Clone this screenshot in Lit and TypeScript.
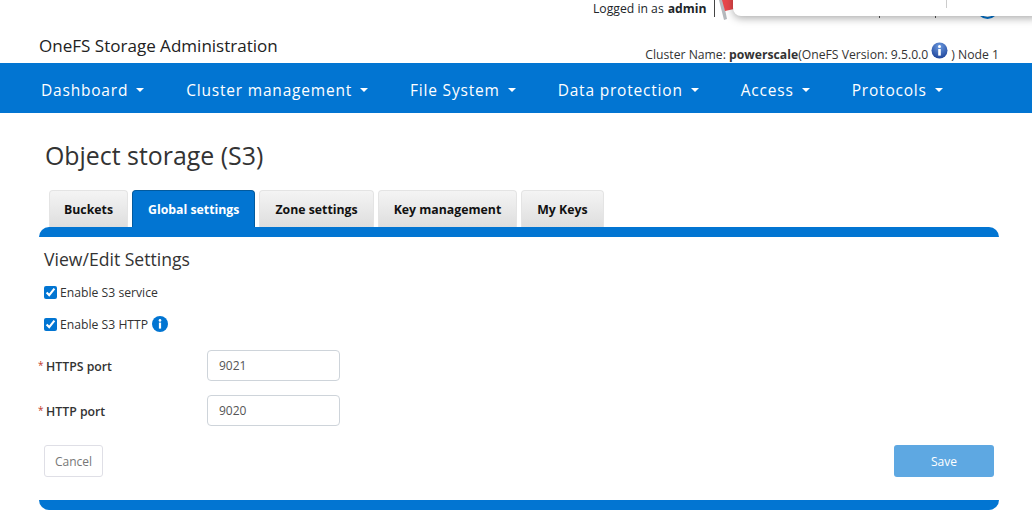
import { LitElement, html, css } from 'lit';
import { customElement } from 'lit/decorators.js';

const MENUS = ['Dashboard', 'Cluster management', 'File System', 'Data protection', 'Access', 'Protocols'];
const TABS = ['Buckets', 'Global settings', 'Zone settings', 'Key management', 'My Keys'];

@customElement('app-root')
export class AppRoot extends LitElement {
  static styles = css`
    :host {
      display: block;
      height: 511px;
      overflow: hidden;
      position: relative;
      background: #fff;
      color: #212529;
      font-family: 'Open Sans', 'Noto Sans', sans-serif;
      font-size: 12px;
    }
    .top {
      height: 63px;
      display: flex;
      flex-direction: column;
    }
    .login {
      height: 17px;
      padding-left: 593px;
      display: flex;
      align-items: center;
      font-size: 12.2px;
      white-space: nowrap;
    }
    .login b { margin-left: 4px; }
    .divider {
      width: 1px;
      height: 17px;
      background: #444;
      margin-left: 8px;
    }
    .brand {
      flex: 1;
      display: flex;
      justify-content: space-between;
      align-items: flex-end;
      padding: 0 33px 0 39px;
    }
    .brand h1 {
      margin: 0 0 5px;
      font-size: 17.05px;
      font-weight: 400;
      line-height: 24px;
      color: #222;
    }
    .cluster {
      display: flex;
      align-items: flex-end;
      font-size: 12.2px;
      line-height: 16px;
      white-space: pre;
      color: #333;
    }
    .cluster svg { margin: 0 3px 4px 3px; }
    nav {
      height: 50px;
      box-sizing: border-box;
      padding: 3px 0 0 41px;
      background: #0275d2;
      display: flex;
      color: #fff;
      align-items: center;
      gap: 42px;
      font-size: 15.5px;
      letter-spacing: 0.8px;
    }
    nav span { display: flex; align-items: center; gap: 8px; }
    nav i {
      width: 0;
      height: 0;
      border: 4.5px solid transparent;
      border-top-color: #fff;
      border-bottom: 0;
    }
    main { padding: 0 33px 0 39px; }
    h2 {
      margin: 26px 0 0 6px;
      font-size: 24.9px;
      line-height: 33px;
      font-weight: 400;
      color: #333;
    }
    .tabs {
      display: flex;
      gap: 4px;
      margin: 18px 0 0 10px;
      height: 37px;
      align-items: flex-end;
    }
    .tab {
      height: 37px;
      padding: 0 15px;
      box-sizing: border-box;
      display: flex;
      align-items: center;
      font-size: 12.3px;
      font-weight: 700;
      color: #111;
      background: linear-gradient(#f4f4f4, #dedede);
      border: 1px solid #e4e4e4;
      border-bottom: 0;
      border-radius: 4px 4px 0 0;
    }
    .tab:first-child { padding: 0 14px; }
    .tab.active {
      background: #0275d2;
      border-color: #025a9e;
      color: #fff;
    }
    .bar { height: 10px; background: #0275d2; }
    .bar.head { border-radius: 10px 10px 0 0; }
    .bar.foot { border-radius: 0 0 10px 10px; margin-top: 23px; }
    h3 {
      margin: 10px 0 0 5px;
      font-size: 17.6px;
      line-height: 24px;
      font-weight: 400;
      color: #333;
    }
    .check {
      display: flex;
      align-items: center;
      gap: 3px;
      margin-left: 5px;
      height: 16px;
      font-size: 12.2px;
      color: #333;
    }
    .check input {
      width: 13px;
      height: 13px;
      margin: 0;
      accent-color: #0275d2;
    }
    .check svg { margin-left: 1px; }
    .checks { display: flex; flex-direction: column; gap: 16px; margin-top: 13px; }
    .fields { display: flex; flex-direction: column; gap: 14px; margin-top: 18px; }
    .field { display: flex; align-items: center; margin-left: -1px; }
    .field label {
      width: 169px;
      padding-top: 1px;
      font-size: 12.3px;
      font-weight: 600;
      color: #333;
      display: flex;
    }
    .field label em {
      width: 8px;
      color: #c0392b;
      font-size: 10px;
      font-style: normal;
      font-weight: 400;
    }
    .field .input {
      width: 133px;
      height: 31px;
      box-sizing: border-box;
      border: 1px solid #ced4da;
      border-radius: 4px;
      padding: 0 11px;
      display: flex;
      align-items: center;
      font-size: 12px;
      color: #555;
    }
    .actions {
      display: flex;
      justify-content: space-between;
      margin: 19px 5px 0;
    }
    .btn {
      height: 32px;
      box-sizing: border-box;
      display: flex;
      align-items: center;
      justify-content: center;
      border-radius: 3px;
      font-size: 12px;
    }
    .btn.cancel { width: 59px; border: 1px solid #dfdfe6; color: #777; }
    .btn.save { width: 100px; background: #5ea8e2; color: #fff; }
    .popup {
      position: absolute;
      left: 733px;
      top: -10px;
      right: -10px;
      height: 26px;
      background: #fff;
      border-radius: 8px;
      box-shadow: 0 2px 8px rgba(0, 0, 0, 0.35);
    }
    .popup::after {
      content: '';
      position: absolute;
      left: 213px;
      top: 0;
      width: 1px;
      height: 18px;
      background: #ccc;
    }
    .flag { position: absolute; left: 718px; top: 0; }
    .under { position: absolute; top: 14px; width: 1px; height: 4px; background: #555; }
    .ring {
      position: absolute;
      left: 977px;
      top: -2px;
      width: 17px;
      height: 17px;
      border: 2px solid #0275d2;
      border-radius: 50%;
    }
  `;

  infoGlossy() {
    return html`<svg width="17" height="17" viewBox="0 0 17 17">
      <defs>
        <radialGradient id="gl" cx="0.5" cy="0.25" r="0.8">
          <stop offset="0" stop-color="#6d9be0"></stop>
          <stop offset="1" stop-color="#1a3f96"></stop>
        </radialGradient>
      </defs>
      <circle cx="8.5" cy="8.5" r="8" fill="url(#gl)"></circle>
      <circle cx="8.5" cy="4.6" r="1.5" fill="#fff"></circle>
      <rect x="7.2" y="7" width="2.6" height="6.6" fill="#fff"></rect>
    </svg>`;
  }

  infoFlat() {
    return html`<svg width="16" height="16" viewBox="0 0 16 16">
      <circle cx="8" cy="8" r="8" fill="#0275d2"></circle>
      <circle cx="8" cy="4.4" r="1.3" fill="#fff"></circle>
      <rect x="6.9" y="6.6" width="2.2" height="6" fill="#fff"></rect>
    </svg>`;
  }

  render() {
    return html`
      <div class="top">
        <div class="login">Logged in as <b>admin</b><span class="divider"></span></div>
        <div class="brand">
          <h1>OneFS Storage Administration</h1>
          <div class="cluster">Cluster Name: <b>powerscale</b>(OneFS Version: 9.5.0.0${this.infoGlossy()}) Node 1</div>
        </div>
      </div>
      <nav>
        ${MENUS.map((m) => html`<span>${m}<i></i></span>`)}
      </nav>
      <main>
        <h2>Object storage (S3)</h2>
        <div class="tabs">
          ${TABS.map((t, i) => html`<div class="tab ${i === 1 ? 'active' : ''}">${t}</div>`)}
        </div>
        <div class="bar head"></div>
        <h3>View/Edit Settings</h3>
        <div class="checks">
          <div class="check"><input type="checkbox" checked />Enable S3 service</div>
          <div class="check"><input type="checkbox" checked />Enable S3 HTTP ${this.infoFlat()}</div>
        </div>
        <div class="fields">
          <div class="field"><label><em>*</em>HTTPS port</label><div class="input">9021</div></div>
          <div class="field"><label><em>*</em>HTTP port</label><div class="input">9020</div></div>
        </div>
        <div class="actions">
          <div class="btn cancel">Cancel</div>
          <div class="btn save">Save</div>
        </div>
        <div class="bar foot"></div>
      </main>
      <span class="under" style="left:879px"></span>
      <span class="under" style="left:935px"></span>
      <span class="ring"></span>
      <svg class="flag" width="16" height="20" viewBox="0 0 16 20">
        <path d="M1 0 L5 0 L9 19 L6 20 Z" fill="#b5b9bd"></path>
        <path d="M4 0 H16 V9 L7 11 Z" fill="#e8474a"></path>
      </svg>
      <div class="popup"></div>
    `;
  }
}
